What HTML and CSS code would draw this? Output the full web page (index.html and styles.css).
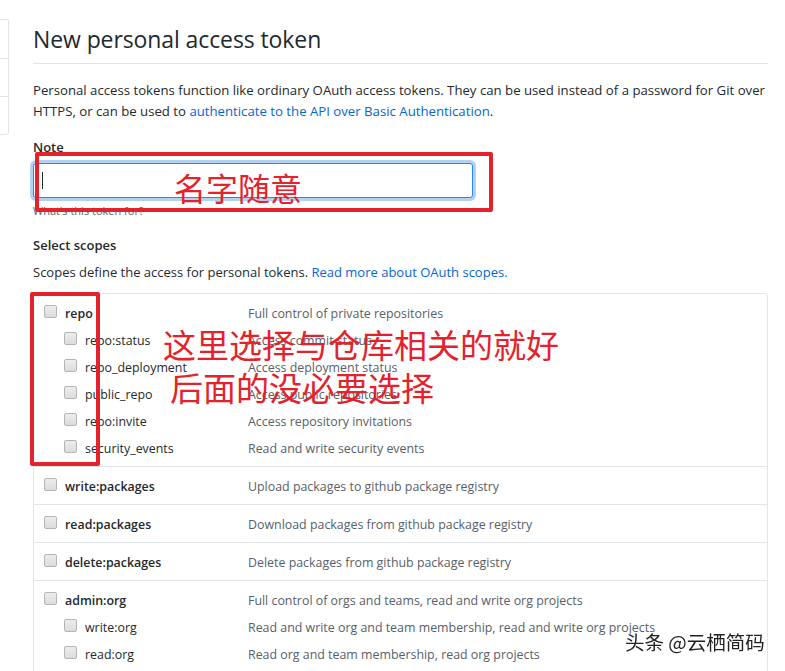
FILE: index.html
```html
<!DOCTYPE html>
<html lang="en">
<head>
    <meta charset="UTF-8">
    <meta name="viewport" content="width=device-width, initial-scale=1.0">
    <title>New personal access token</title>
    <link rel="stylesheet" href="styles.css">
</head>
<body>
    <div class="page">
        <!-- Settings menu (cut off on the left) -->
        <nav class="side-menu">
            <div class="menu-item"></div>
            <div class="menu-item"></div>
            <div class="menu-item"></div>
        </nav>

        <!-- Main column -->
        <main class="main">
            <h1 class="page-title">New personal access token</h1>

            <p class="intro">
                Personal access tokens function like ordinary OAuth access tokens. They can be used instead of a password for Git over HTTPS, or can be used to <a href="#">authenticate to the API over Basic Authentication</a>.
            </p>

            <div class="form-group note-group">
                <label class="form-label" for="note">Note</label>
                <div class="input-wrap">
                    <input class="form-input" id="note" type="text">
                    <span class="caret"></span>
                </div>
                <p class="note">What's this token for?</p>

                <!-- Annotation -->
                <div class="mark mark-note"></div>
                <span class="mark-text mark-text-note">名字随意</span>
            </div>

            <div class="form-group">
                <div class="form-label">Select scopes</div>
                <p class="scopes-intro">Scopes define the access for personal tokens. <a href="#">Read more about OAuth scopes.</a></p>
            </div>

            <div class="scopes">
                <div class="scope-group repo-group">
                    <div class="scope-row">
                        <label class="scope-name top"><input type="checkbox" class="cb">repo</label>
                        <span class="scope-desc">Full control of private repositories</span>
                    </div>
                    <div class="scope-row">
                        <label class="scope-name sub"><input type="checkbox" class="cb">repo:status</label>
                        <span class="scope-desc">Access commit status</span>
                    </div>
                    <div class="scope-row">
                        <label class="scope-name sub"><input type="checkbox" class="cb">repo_deployment</label>
                        <span class="scope-desc">Access deployment status</span>
                    </div>
                    <div class="scope-row">
                        <label class="scope-name sub"><input type="checkbox" class="cb">public_repo</label>
                        <span class="scope-desc">Access public repositories</span>
                    </div>
                    <div class="scope-row">
                        <label class="scope-name sub"><input type="checkbox" class="cb">repo:invite</label>
                        <span class="scope-desc">Access repository invitations</span>
                    </div>
                    <div class="scope-row">
                        <label class="scope-name sub"><input type="checkbox" class="cb">security_events</label>
                        <span class="scope-desc">Read and write security events</span>
                    </div>

                    <!-- Annotation -->
                    <div class="mark mark-repo"></div>
                    <div class="mark-text mark-text-repo">
                        <span>这里选择与仓库相关的就好</span>
                        <span class="second">后面的没必要选择</span>
                    </div>
                </div>

                <div class="scope-group">
                    <div class="scope-row">
                        <label class="scope-name top"><input type="checkbox" class="cb">write:packages</label>
                        <span class="scope-desc">Upload packages to github package registry</span>
                    </div>
                </div>

                <div class="scope-group">
                    <div class="scope-row">
                        <label class="scope-name top"><input type="checkbox" class="cb">read:packages</label>
                        <span class="scope-desc">Download packages from github package registry</span>
                    </div>
                </div>

                <div class="scope-group">
                    <div class="scope-row">
                        <label class="scope-name top"><input type="checkbox" class="cb">delete:packages</label>
                        <span class="scope-desc">Delete packages from github package registry</span>
                    </div>
                </div>

                <div class="scope-group">
                    <div class="scope-row">
                        <label class="scope-name top"><input type="checkbox" class="cb">admin:org</label>
                        <span class="scope-desc">Full control of orgs and teams, read and write org projects</span>
                    </div>
                    <div class="scope-row">
                        <label class="scope-name sub"><input type="checkbox" class="cb">write:org</label>
                        <span class="scope-desc">Read and write org and team membership, read and write org projects</span>
                    </div>
                    <div class="scope-row">
                        <label class="scope-name sub"><input type="checkbox" class="cb">read:org</label>
                        <span class="scope-desc">Read org and team membership, read org projects</span>
                    </div>
                </div>
            </div>
        </main>
    </div>

    <!-- Watermark -->
    <div class="watermark">头条 @云栖简码</div>
</body>
</html>
```

FILE: styles.css
```css
/* Base styles */
* {
    margin: 0;
    padding: 0;
    box-sizing: border-box;
}

body {
    font-family: 'Open Sans', 'Noto Sans', Arial, sans-serif;
    font-size: 13px;
    line-height: 21px;
    color: #24292e;
    background-color: #fff;
    overflow: hidden;
}

a {
    color: #0366d6;
    text-decoration: none;
}

.page {
    display: flex;
    align-items: flex-start;
}

/* Side menu */
.side-menu {
    width: 9px;
    margin-top: 19px;
    border: 1px solid #e1e4e8;
    border-left: none;
    border-radius: 0 3px 3px 0;
}

.menu-item {
    height: 38px;
    border-top: 1px solid #e1e4e8;
}

.menu-item:first-child {
    border-top: none;
}

/* Main column */
.main {
    width: 735px;
    margin-left: 24px;
}

.page-title {
    font-size: 23px;
    font-weight: 400;
    line-height: 30px;
    padding-top: 24px;
    padding-bottom: 9px;
    border-bottom: 1px solid #e1e4e8;
    letter-spacing: -0.1px;
}

.intro {
    margin-top: 16px;
    font-size: 13.2px;
}

/* Form */
.form-group {
    margin-top: 15px;
}

.note-group {
    position: relative;
}

.form-label {
    display: block;
    font-weight: 600;
}

.input-wrap {
    position: relative;
    width: 440px;
    margin-top: 5px;
}

.form-input {
    display: block;
    width: 100%;
    height: 35px;
    border: 1px solid #2188ff;
    border-radius: 3px;
    box-shadow: 0 0 0 3px rgba(3, 102, 214, 0.3);
    outline: none;
    font: inherit;
    padding: 0 8px;
}

.caret {
    position: absolute;
    left: 9px;
    top: 9px;
    width: 1px;
    height: 17px;
    background-color: #24292e;
}

.note {
    margin-top: 4px;
    font-size: 11px;
    line-height: 18px;
    color: #586069;
}

.scopes-intro {
    margin-top: 6px;
}

/* Scopes table */
.scopes {
    margin-top: 10px;
    border: 1px solid #e1e4e8;
    border-radius: 3px;
    font-size: 12.4px;
}

.scope-group {
    padding: 5px 0;
    border-top: 1px solid #e1e4e8;
}

.scope-group:first-child {
    border-top: none;
}

.repo-group {
    position: relative;
}

.scope-row {
    display: flex;
    align-items: center;
    height: 27px;
    padding-top: 1px;
}

.scope-name {
    display: flex;
    align-items: center;
    width: 214px;
    flex-shrink: 0;
}

.scope-name.top {
    padding-left: 10px;
    font-weight: 600;
}

.scope-name.sub {
    padding-left: 30px;
}

.scope-desc {
    color: #586069;
}

.cb {
    appearance: none;
    width: 13px;
    height: 13px;
    margin-right: 8px;
    margin-top: -4px;
    border: 1px solid #b5b5b5;
    border-radius: 2px;
    background: linear-gradient(#ededed, #dcdcdc);
}

/* Red annotations */
.mark {
    position: absolute;
    border: 4px solid #e4222b;
    border-radius: 2px;
}

.mark-note {
    left: 2px;
    top: 15px;
    width: 458px;
    height: 60px;
}

.mark-repo {
    left: -4px;
    top: -2px;
    width: 70px;
    height: 174px;
}

.mark-text {
    position: absolute;
    font-family: 'Noto Sans CJK SC', sans-serif;
    color: #e4222b;
    white-space: nowrap;
}

.mark-text-note {
    left: 141px;
    top: 30px;
    font-size: 32px;
    line-height: 40px;
}

.mark-text-repo {
    left: 129px;
    top: 29px;
    font-size: 33px;
    line-height: 43px;
    display: flex;
    flex-direction: column;
}

.mark-text-repo .second {
    padding-left: 7px;
}

/* Watermark */
.watermark {
    position: fixed;
    left: 625px;
    top: 630px;
    font-family: 'Noto Sans CJK SC', sans-serif;
    font-size: 19.5px;
    line-height: 24px;
    color: #222;
    text-shadow: 0 0 2px #fff, 0 0 2px #fff;
}
```
